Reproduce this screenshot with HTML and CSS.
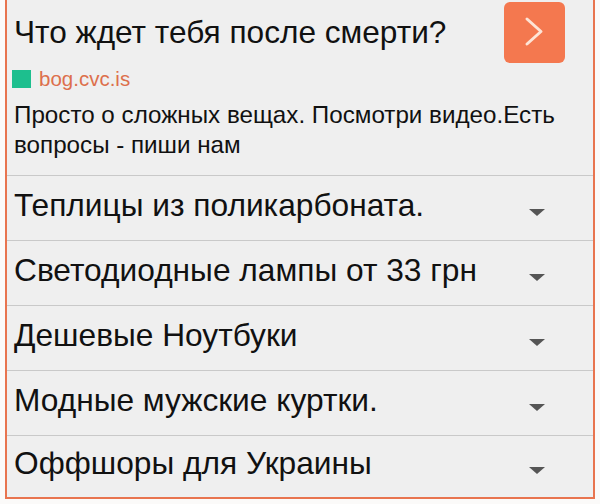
FILE: index.html
```html
<!DOCTYPE html>
<html>
<head>
  <title>Ad block</title>
  <link rel="stylesheet" href="styles.css">
</head>
<body>
  <div class="box">
    <div class="ad">
      <div class="ad-head">
        <div class="ad-title">Что ждет тебя после смерти?</div>
        <a class="go-btn" href="#">
          <svg width="61" height="61" viewBox="0 0 61 61">
            <path d="M23 17 L37 29.5 L23 42" fill="none" stroke="#fde4d6" stroke-width="3" stroke-linecap="round" stroke-linejoin="round"/>
          </svg>
        </a>
      </div>
      <div class="ad-domain"><span class="dot"></span>bog.cvc.is</div>
      <div class="ad-desc">Просто о сложных вещах. Посмотри видео.Есть вопросы - пиши нам</div>
    </div>

    <div class="row"><span>Теплицы из поликарбоната.</span><i class="caret"></i></div>
    <div class="row"><span>Светодиодные лампы от 33 грн</span><i class="caret"></i></div>
    <div class="row"><span>Дешевые Ноутбуки</span><i class="caret"></i></div>
    <div class="row"><span>Модные мужские куртки.</span><i class="caret"></i></div>
    <div class="row"><span>Оффшоры для Украины</span><i class="caret"></i></div>
  </div>
</body>
</html>
```

FILE: styles.css
```css
body {
  margin: 0;
  background: #fbfaf9;
  font-family: 'Liberation Sans', Arial, sans-serif;
  color: #111;
}
.box {
  margin-left: 5px;
  width: 586px;
  background: #efefef;
  border: 2px solid #e8744f;
  border-top: none;
}
.ad {
  padding: 2px 8px 15px 6px;
}
.ad-head {
  display: flex;
  align-items: center;
  justify-content: space-between;
}
.ad-title {
  font-size: 31.6px;
  padding-left: 1px;
}
.go-btn {
  display: block;
  width: 61px;
  height: 61px;
  margin-right: 20px;
  background: #f4784f;
  border-radius: 6px;
}
.go-btn svg {
  display: block;
}
.ad-domain {
  display: flex;
  align-items: center;
  margin-top: 6px;
  height: 20px;
  font-size: 20.5px;
  color: #dd6f4c;
}
.dot {
  width: 19px;
  height: 18px;
  background: #1dbf8e;
  margin-right: 8px;
  margin-left: -1px;
}
.ad-desc {
  margin-top: 11px;
  font-size: 24.2px;
  line-height: 30px;
  padding-left: 1px;
}
.row {
  display: flex;
  align-items: center;
  justify-content: space-between;
  height: 64px;
  border-top: 1px solid #c9c9c9;
  padding: 0 48px 0 7px;
  font-size: 31.7px;
}
.row:last-child {
  height: 61px;
}
.row span {
  padding-bottom: 6px;
}
.caret {
  width: 0;
  height: 0;
  margin-top: 8px;
  border-left: 8px solid transparent;
  border-right: 8px solid transparent;
  border-top: 7px solid #555;
}
```
